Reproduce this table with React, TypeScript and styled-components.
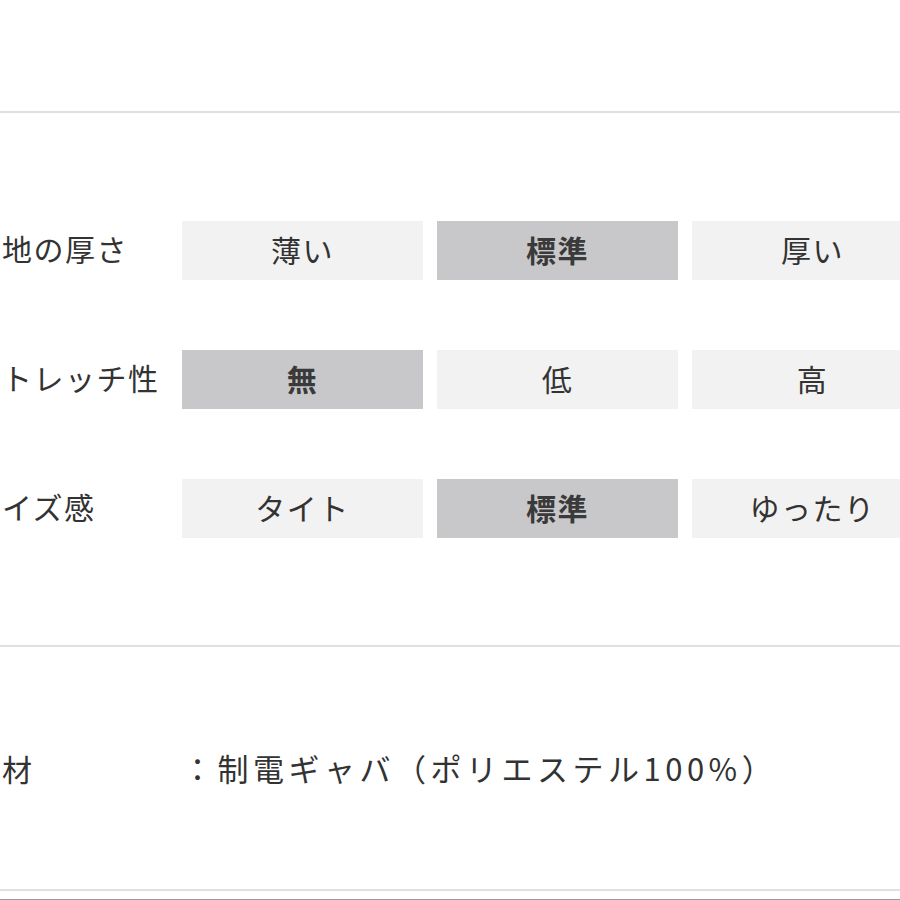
import React from "react";
import styled, { createGlobalStyle } from "styled-components";

const Global = createGlobalStyle`
  html, body { margin: 0; padding: 0; background: #ffffff; overflow: hidden; }
  body { font-family: "Noto Sans CJK JP", "Noto Sans", sans-serif; color: #333333; }
`;

const Page = styled.div`
  width: 933px;
  height: 900px;
  display: flex;
  flex-direction: column;
  & > * { flex-shrink: 0; }
`;

const Divider = styled.div<{ $top: number }>`
  height: 2px;
  margin-top: ${(p) => p.$top}px;
  width: 900px;
  background: #e0e0e0;
`;

const SpecList = styled.div`
  display: flex;
  flex-direction: column;
  gap: 70px;
  padding: 108px 0 107px;
`;

const Row = styled.div`
  display: grid;
  grid-template-columns: 168px 241px 241px 241px;
  column-gap: 14px;
  align-items: center;
`;

const Label = styled.div`
  font-size: 30px;
  letter-spacing: 1.5px;
  line-height: 55px;
  padding-bottom: 4px;
  white-space: nowrap;
  color: #333;
  padding-left: 2px;
`;

const Option = styled.div<{ $selected?: boolean }>`
  height: 59px;
  box-sizing: border-box;
  padding-bottom: 4px;
  display: flex;
  align-items: center;
  justify-content: center;
  font-size: 30px;
  letter-spacing: 1.5px;
  background: ${(p) => (p.$selected ? "#c8c8ca" : "#f2f2f2")};
  font-weight: ${(p) => (p.$selected ? 700 : 400)};
  color: ${(p) => (p.$selected ? "#3a3a3a" : "#333")};
`;

const Material = styled.div`
  display: grid;
  grid-template-columns: 182px auto;
  align-items: center;
  height: 40px;
  padding: 101px 0 101px;
`;

const MaterialLabel = styled(Label)`
  line-height: 40px;
  padding-bottom: 0;
`;

const MaterialValue = styled.div`
  font-size: 31px;
  letter-spacing: 4.5px;
  line-height: 40px;
  white-space: nowrap;
  color: #333;
`;

const BottomEdge = styled.div`
  height: 1px;
  margin-top: 8px;
  width: 900px;
  background: #9a9a9a;
`;

const specs = [
  { label: "地の厚さ", options: ["薄い", "標準", "厚い"], selected: 1 },
  { label: "トレッチ性", options: ["無", "低", "高"], selected: 0 },
  { label: "イズ感", options: ["タイト", "標準", "ゆったり"], selected: 1 },
];

export default function App() {
  return (
    <>
      <Global />
      <Page>
        <Divider $top={111} />
        <SpecList>
          {specs.map((s) => (
            <Row key={s.label}>
              <Label>{s.label}</Label>
              {s.options.map((o, i) => (
                <Option key={o + i} $selected={i === s.selected}>
                  {o}
                </Option>
              ))}
            </Row>
          ))}
        </SpecList>
        <Divider $top={0} />
        <Material>
          <MaterialLabel>材</MaterialLabel>
          <MaterialValue>：制電ギャバ（ポリエステル100%）</MaterialValue>
        </Material>
        <Divider $top={0} />
        <BottomEdge />
      </Page>
    </>
  );
}
